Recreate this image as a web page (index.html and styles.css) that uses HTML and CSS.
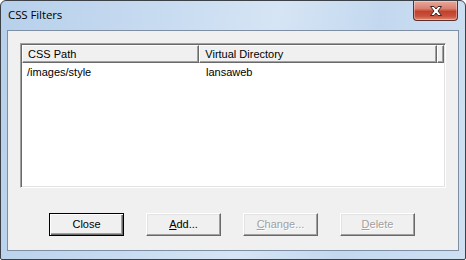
FILE: index.html
```html
<!DOCTYPE html>
<html>
<head>
<meta charset="utf-8">
<link rel="stylesheet" href="styles.css">
</head>
<body>
<div class="window">
  <div class="titlebar">
    <span class="title">CSS Filters</span>
    <div class="close-btn">
      <svg width="16" height="12" viewBox="0 0 16 12">
        <path d="M2.5 1.5 L6 1.5 L8 4 L10 1.5 L13.5 1.5 L10 6 L13.5 10.5 L10 10.5 L8 8 L6 10.5 L2.5 10.5 L6 6 Z" fill="#fff" stroke="#3b2a28" stroke-width="1" stroke-linejoin="round"/>
      </svg>
    </div>
  </div>
  <div class="client">
    <div class="listview">
      <div class="header">
        <div class="hcell c1">CSS Path</div>
        <div class="hcell c2">Virtual Directory</div>
        <div class="hcell c3"></div>
      </div>
      <div class="row">
        <div class="cell c1">/images/style</div>
        <div class="cell c2">lansaweb</div>
      </div>
    </div>
    <div class="buttons">
      <div class="btn default">Close</div>
      <div class="btn"><u>A</u>dd...</div>
      <div class="btn disabled"><u>C</u>hange...</div>
      <div class="btn disabled"><u>D</u>elete</div>
    </div>
  </div>
</div>
</body>
</html>
```

FILE: styles.css
```css
html, body {
  margin: 0;
  padding: 0;
  background: #ffffff;
}
.window {
  width: 466px;
  height: 260px;
  box-sizing: border-box;
  border: 1px solid #3c4047;
  border-radius: 6px 6px 2px 2px;
  background: linear-gradient(100deg, #b7d0eb 0%, #c9dcf1 35%, #d6e5f5 55%, #c3d8ef 75%, #cfe0f3 100%);
  display: flex;
  flex-direction: column;
  font-family: Tahoma, "Liberation Sans", "DejaVu Sans", sans-serif;
  font-size: 11px;
  color: #000;
  overflow: hidden;
}
.titlebar {
  height: 29px;
  display: flex;
  align-items: flex-start;
  justify-content: space-between;
  padding: 0 7px 0 7px;
  flex: none;
}
.title {
  font-family: "Open Sans", "Liberation Sans", sans-serif;
  font-size: 11.5px;
  margin-top: 6px;
  color: #000;
  letter-spacing: -0.1px;
}
.close-btn {
  width: 45px;
  height: 20px;
  margin-top: 0;
  box-sizing: border-box;
  border: 1px solid #5b2f2a;
  border-top: none;
  border-radius: 0 0 4px 4px;
  background: linear-gradient(180deg, #e9a99b 0%, #d98070 40%, #c2402c 55%, #c9523d 80%, #dd8a76 100%);
  box-shadow: inset 0 0 0 1px rgba(255,255,255,0.35);
  display: flex;
  align-items: center;
  justify-content: center;
}
.client {
  flex: 1;
  margin: 0 6px 8px 6px;
  border: 1px solid #7f8fa3;
  background: #f0f0f0;
  padding: 12px 0 0 12px;
  display: flex;
  flex-direction: column;
}
.listview {
  width: 426px;
  height: 145px;
  box-sizing: border-box;
  background: #fff;
  border-top: 1px solid #a0a0a0;
  border-left: 1px solid #a0a0a0;
  border-right: 1px solid #ffffff;
  border-bottom: 1px solid #ffffff;
  box-shadow: inset 1px 1px 0 #696969, inset -1px -1px 0 #e3e3e3;
  padding: 1px;
}
.header {
  display: flex;
  height: 18px;
}
.hcell {
  box-sizing: border-box;
  height: 18px;
  background: #f0f0f0;
  border-top: 1px solid #fff;
  border-left: 1px solid #fff;
  border-right: 1px solid #696969;
  border-bottom: 1px solid #696969;
  box-shadow: inset -1px -1px 0 #a0a0a0;
  padding: 1px 0 0 5px;
  line-height: 14px;
  white-space: nowrap;
}
.hcell.c1 { width: 179px; }
.hcell.c2 { width: 240px; }
.hcell.c3 { flex: 1; }
.row {
  display: flex;
  height: 15px;
  line-height: 15px;
  margin-top: 2px;
}
.cell { padding-left: 5px; box-sizing: border-box; white-space: nowrap; }
.cell.c1 { width: 179px; }
.cell.c2 { width: 240px; }
.buttons {
  display: flex;
  gap: 22px;
  margin-top: 25px;
  padding-left: 29px;
}
.btn {
  width: 75px;
  height: 23px;
  box-sizing: border-box;
  background: #f0f0f0;
  border-top: 1px solid #ffffff;
  border-left: 1px solid #ffffff;
  border-right: 1px solid #696969;
  border-bottom: 1px solid #696969;
  box-shadow: inset -1px -1px 0 #a0a0a0, inset 1px 1px 0 #e3e3e3;
  display: flex;
  align-items: center;
  justify-content: center;
  padding-bottom: 1px;
}
.btn.default {
  border: 1px solid #000;
  box-shadow: inset 1px 1px 0 #fff, inset -1px -1px 0 #696969, inset -2px -2px 0 #a0a0a0;
}
.btn.disabled {
  color: #a0a0a0;
  text-shadow: 1px 1px 0 #fff;
}
u { text-decoration: underline; text-underline-offset: 1px; }
```
